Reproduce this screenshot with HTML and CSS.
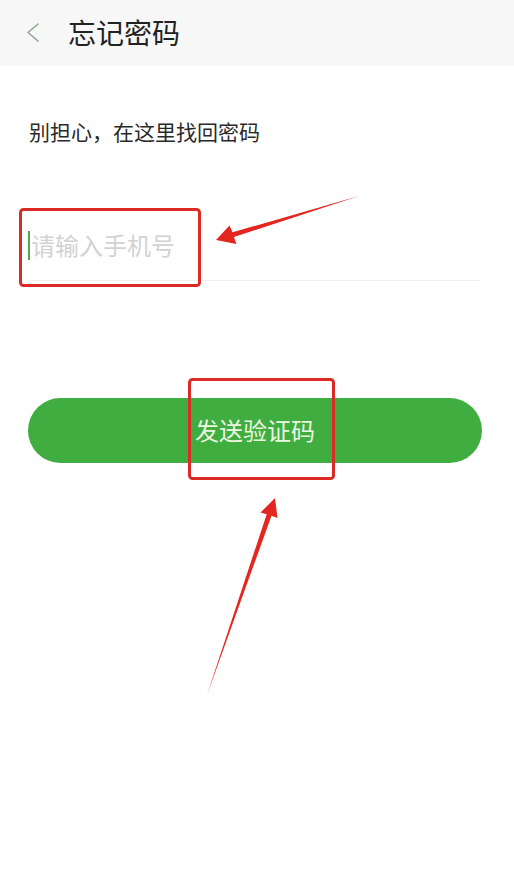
FILE: index.html
```html
<!DOCTYPE html>
<html lang="zh-CN">
<head>
<meta charset="utf-8">
<title>忘记密码</title>
<link rel="stylesheet" href="styles.css">
</head>
<body>
<div class="page">
  <header class="topbar">
    <svg class="back" width="14" height="20" viewBox="0 0 14 20"><polyline points="12,1 2,9.5 12,18" fill="none" stroke="#8fa68f" stroke-width="1.6" stroke-linecap="round" stroke-linejoin="round"/></svg>
    <h1 class="title">忘记密码</h1>
  </header>
  <main class="content">
    <p class="hint">别担心，在这里找回密码</p>
    <div class="field">
      <span class="caret"></span>
      <span class="placeholder">请输入手机号</span>
    </div>
    <button class="send">发送验证码</button>
  </main>
  <svg class="marks" width="514" height="891" viewBox="0 0 514 891">
    <rect x="20.5" y="209.5" width="179" height="76" rx="3" fill="none" stroke="#dc2b24" stroke-width="3"/>
    <rect x="189.5" y="379.5" width="144" height="99" rx="3" fill="none" stroke="#dc2b24" stroke-width="3"/>
    <polygon points="359,196 232.5,232.3 229.5,225.5 216,240 236.5,244 233.9,237.1" fill="#e3261f"/>
    <polygon points="207,695 266.7,514.2 260.5,512.5 275,498 277.5,518 271.5,515.8" fill="#e3261f"/>
  </svg>
</div>
</body>
</html>
```
FILE: styles.css
```css
html, body {
  margin: 0;
  padding: 0;
  background: #ffffff;
}
body {
  font-family: "Noto Sans CJK SC", "Noto Sans", sans-serif;
}
.page {
  position: relative;
  width: 514px;
  min-height: 891px;
  overflow: hidden;
}
.topbar {
  height: 66px;
  background: #f7f7f7;
  display: flex;
  align-items: center;
  padding-left: 26px;
  box-sizing: border-box;
}
.back {
  display: block;
  margin-top: -1px;
}
.title {
  margin: -2px 0 0 28px;
  font-size: 28px;
  font-weight: 400;
  color: #222222;
  line-height: 36px;
}
.content {
  padding: 0 32px 0 28px;
}
.hint {
  margin: 50px 0 0 1px;
  font-size: 21px;
  line-height: 30px;
  color: #2a2a2a;
}
.field {
  margin: 67px 0 0 2px;
  height: 67px;
  border-bottom: 1px solid #eeeeee;
  display: flex;
  align-items: center;
  width: 451px;
}
.caret {
  width: 2px;
  height: 29px;
  background: #55a84a;
  margin-left: -2px;
  margin-right: 1px;
  margin-top: -3px;
}
.placeholder {
  font-size: 24px;
  color: #d2d2d2;
  line-height: 32px;
  margin-top: -3px;
}
.send {
  display: block;
  margin-top: 117px;
  width: 454px;
  height: 65px;
  border: none;
  border-radius: 33px;
  background: #3fad3f;
  color: #ecf7e2;
  font-family: "Noto Sans CJK SC", "Noto Sans", sans-serif;
  font-size: 24px;
  padding: 0;
  padding-bottom: 2px;
}
.marks {
  position: absolute;
  left: 0;
  top: 0;
  pointer-events: none;
}
```
